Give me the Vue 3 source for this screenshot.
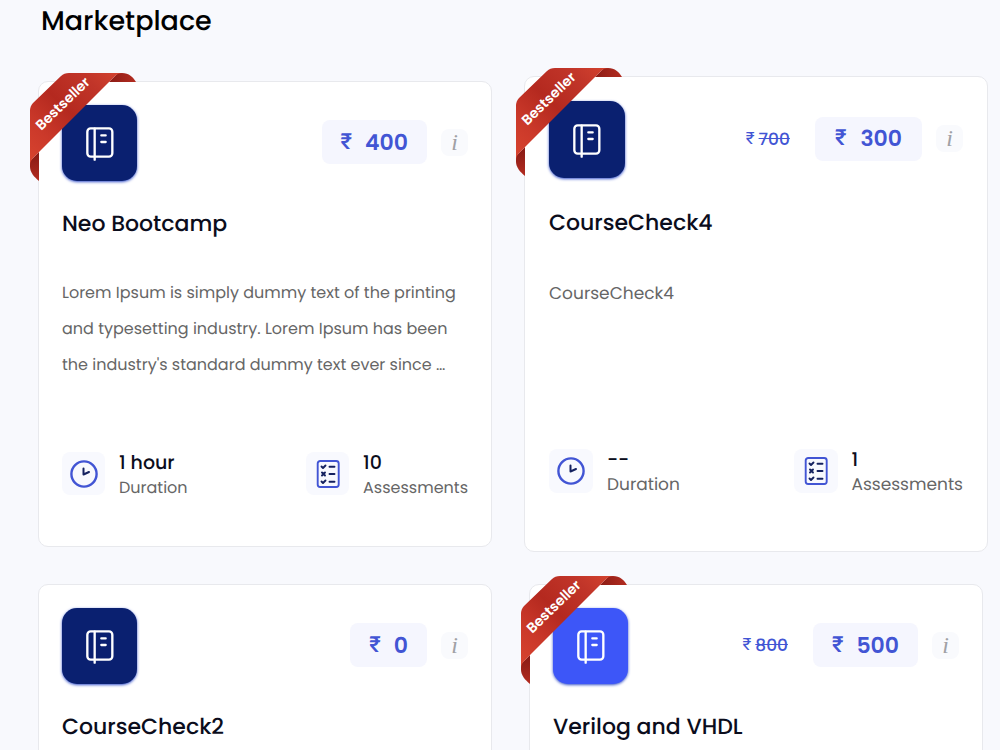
<script setup>
const lorem =
  "Lorem Ipsum is simply dummy text of the printing and typesetting industry. Lorem Ipsum has been the industry's standard dummy text ever since …"

const courses = [
  { name: 'Neo Bootcamp', price: 400, text: lorem, duration: '1 hour', assessments: 10, best: true },
  { name: 'CourseCheck4', price: 300, old: 700, text: 'CourseCheck4', duration: '--', assessments: 1, best: true, raised: true },
  { name: 'CourseCheck2', price: 0, text: 'CourseCheck2', duration: '--', assessments: 1 },
  { name: 'Verilog and VHDL', price: 500, old: 800, text: 'Verilog and VHDL', duration: '--', assessments: 1, best: true, bright: true }
]
</script>

<template>
  <main class="page">
    <h1>Marketplace</h1>
    <div class="grid">
      <article v-for="c in courses" :key="c.name" class="card" :class="{ raised: c.raised }">
        <svg v-if="c.best" class="ribbon" viewBox="0 0 107 109" role="img" aria-label="Bestseller">
          <defs>
            <linearGradient id="band" x1="0" y1="1" x2="1" y2="0">
              <stop offset="0" stop-color="#d8442f" />
              <stop offset="0.24" stop-color="#cb392a" />
              <stop offset="0.5" stop-color="#b4291f" />
              <stop offset="0.78" stop-color="#c13529" />
              <stop offset="1" stop-color="#d5442f" />
            </linearGradient>
            <linearGradient id="foldTop" x1="0" y1="0" x2="1" y2="0">
              <stop offset="0" stop-color="#8c1c15" />
              <stop offset="1" stop-color="#b32c20" />
            </linearGradient>
            <linearGradient id="foldSide" x1="0" y1="0" x2="0" y2="1">
              <stop offset="0" stop-color="#861914" />
              <stop offset="1" stop-color="#b32c20" />
            </linearGradient>
          </defs>
          <path d="M79 9 88 0H92C99 0 103 4 106 9Z" fill="url(#foldTop)" />
          <path d="M9 79 0 88V94C0 99 4 104 9 108Z" fill="url(#foldSide)" />
          <path d="M0 38Q0 33 3 30L31 3Q34 0 39 0H93Q88 0 85 3L4 84Q0 88 0 92Z" fill="url(#band)" />
          <text x="36" y="34" text-anchor="middle" transform="rotate(-44 36 34)">Bestseller</text>
        </svg>
        <header class="head">
          <div class="tile" :class="{ bright: c.bright }">
            <svg class="book" viewBox="192 195 90 108" fill="none" stroke="#fff" stroke-width="7" stroke-linecap="round">
              <rect x="199" y="205" width="75" height="85" rx="10" />
              <path d="M221 206V299M241 226H254M241 246H254" />
            </svg>
          </div>
          <div class="pricing">
            <div v-if="c.old" class="old"><span class="rupee">₹</span><s>{{ c.old }}</s></div>
            <div class="price"><span class="rupee">₹</span><span>{{ c.price }}</span></div>
            <button class="info" type="button" :aria-label="'About ' + c.name">i</button>
          </div>
        </header>
        <h2>{{ c.name }}</h2>
        <p>{{ c.text }}</p>
        <div class="stats">
          <div class="stat">
            <span class="chip">
              <svg viewBox="0 0 28 28" fill="none" stroke-linecap="round" stroke-linejoin="round">
                <circle cx="14" cy="14" r="12.6" stroke="#4255d4" stroke-width="2.4" />
                <path d="M13.5 8.500V14.500L19 12" stroke="#14215f" stroke-width="2" />
              </svg>
            </span>
            <div><strong>{{ c.duration }}</strong><span class="label">Duration</span></div>
          </div>
          <div class="stat">
            <span class="chip">
              <svg viewBox="0 0 28 28" fill="none" stroke-linecap="round" stroke-linejoin="round">
                <rect x="3.7" y="1" width="21" height="26" rx="2.5" stroke="#4255d4" stroke-width="1.9" />
                <path d="M7.500 6.500 9 8 11.500 5.500M15.500 6.800H20.500M8 12.500 11 15.500M11 12.500 8 15.500M15.500 14H20.500M7.500 21.500 9 23 11.500 20.500M15.500 21.800H20.500" stroke="#14215f" stroke-width="1.9" />
              </svg>
            </span>
            <div><strong>{{ c.assessments }}</strong><span class="label">Assessments</span></div>
          </div>
        </div>
      </article>
    </div>
  </main>
</template>

<style>
body {
  margin: 0;
  background: #f8f9fd;
}
</style>

<style scoped>
.page {
  padding: 0 17px 0 38px;
  font-family: Poppins, Inter, "Liberation Sans", sans-serif;
  text-rendering: geometricPrecision;
  color: #0b0d1c;
}
h1 {
  margin: 0 3px;
  padding-bottom: 38px;
  font-size: 27px;
  line-height: 43px;
  font-weight: 500;
  color: #000;
}
.grid {
  display: grid;
  grid-template-columns: 1fr 1fr;
  gap: 37px;
}
.card {
  position: relative;
  box-sizing: border-box;
  min-width: 0;
  min-height: 466px;
  padding: 23px 23px 40px;
  background: #fff;
  border: 1px solid #e8e9ed;
  border-radius: 10px;
}
.raised {
  margin: -5px;
  padding: 24px;
}
.ribbon {
  position: absolute;
  left: -9px;
  top: -9px;
  width: 107px;
  height: 109px;
  z-index: 1;
}
.ribbon text {
  fill: #fff;
  font-size: 14px;
  font-weight: 600;
}
.head {
  display: flex;
  justify-content: space-between;
  align-items: center;
}
.tile {
  display: grid;
  place-items: center;
  width: 75px;
  height: 76px;
  border-radius: 15px;
  background: #0a2070;
  box-shadow: 0 1px 3px #3450c8;
}
.bright {
  background: #3d56f8;
}
.book {
  width: 30px;
  height: 36px;
}
.pricing {
  display: flex;
  align-items: center;
  padding-bottom: 2px;
  color: #4255d4;
}
.old {
  display: flex;
  align-items: center;
  gap: 4px;
  margin-right: 25px;
  font-size: 17px;
  font-weight: 500;
}
.rupee {
  font-family: Roboto, Inter, sans-serif;
  font-weight: 400;
}
.price {
  display: flex;
  align-items: center;
  gap: 13px;
  height: 44px;
  padding: 0 19px;
  margin-right: 14px;
  border-radius: 8px;
  background: #f5f6fe;
  font-size: 22px;
  font-weight: 600;
}
.price .rupee {
  font-weight: 500;
}
.info {
  width: 27px;
  height: 27px;
  padding: 0;
  border: 0;
  border-radius: 8px;
  background: #f9fafd;
  color: #a0a1a5;
  font: italic 24px/27px "Liberation Serif", serif;
}
h2 {
  margin: 25px 0 33px;
  font-size: 22px;
  line-height: 36px;
  font-weight: 500;
}
p {
  min-height: 108px;
  margin: 0 0 67px;
  font-size: 16px;
  line-height: 36px;
  color: #666;
}
.stats {
  display: flex;
  justify-content: space-between;
}
.stat {
  display: flex;
  align-items: flex-start;
  gap: 14px;
}
.chip {
  display: grid;
  place-items: center;
  width: 43px;
  height: 43px;
  margin-top: 2px;
  border-radius: 8px;
  background: #f8f9fe;
}
.chip svg {
  width: 28px;
  height: 28px;
}
strong,
.label {
  display: block;
  line-height: 25px;
}
strong {
  font-size: 19px;
  font-weight: 500;
}
.label {
  font-size: 16px;
  color: #666;
}
.raised .tile {
  width: 76px;
  height: 77px;
}
.raised .price {
  padding: 0 20px;
  gap: 14px;
}
.raised h2 {
  margin: 27px 0 34px;
}
.raised p {
  margin-bottom: 64px;
  font-size: 17px;
}
.raised .label {
  font-size: 17px;
}
.raised .chip {
  width: 44px;
  height: 44px;
}
</style>
